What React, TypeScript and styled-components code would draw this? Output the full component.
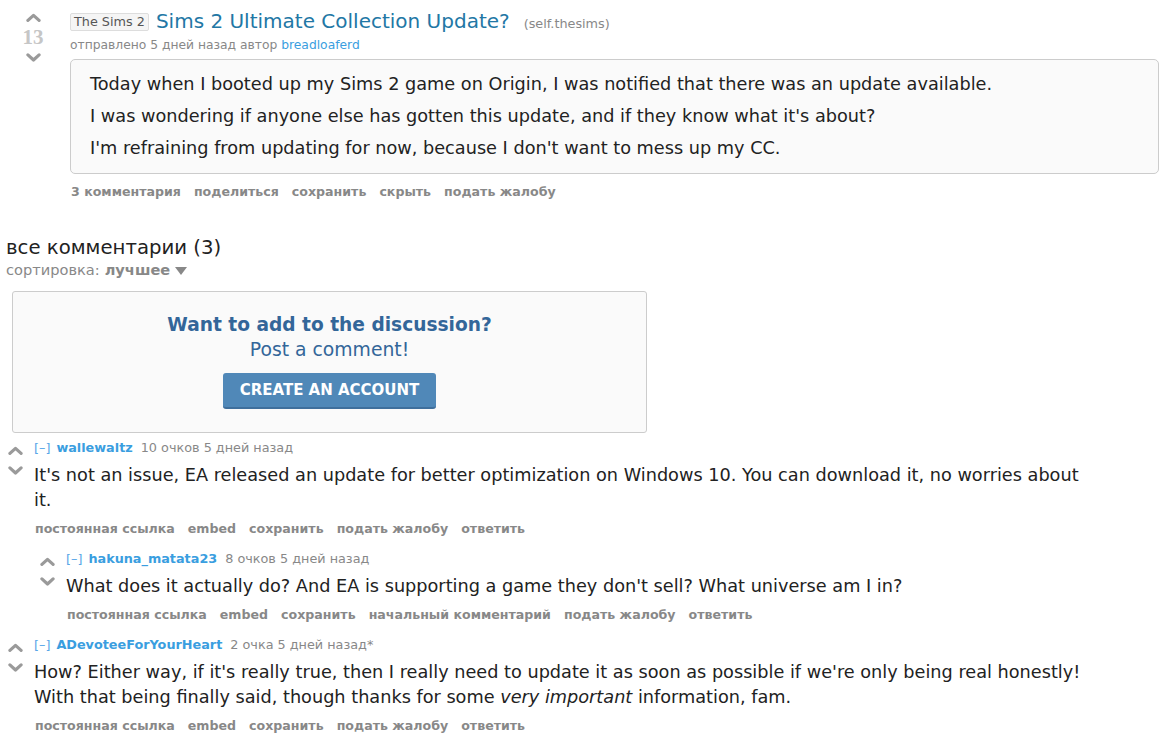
import React from 'react';
import styled, { createGlobalStyle } from 'styled-components';

const GlobalStyle = createGlobalStyle`
  body {
    margin: 0;
    background: #fff;
    font-family: 'DejaVu Sans', Verdana, sans-serif;
    color: #222;
  }
`;

const Page = styled.div`
  padding: 9px 0 0 6px;
`;

const Thing = styled.div`
  display: flex;
  align-items: flex-start;
`;

const Midcol = styled.div`
  width: 54px;
  margin-right: 10px;
  display: flex;
  flex-direction: column;
  align-items: center;
  padding-top: 4px;
  flex-shrink: 0;
`;

const Score = styled.div`
  font-family: 'Liberation Serif', 'Times New Roman', serif;
  font-weight: bold;
  font-size: 21px;
  line-height: 24px;
  color: #c6c6c6;
  margin: 3px 0 4px;
`;

const Entry = styled.div`
  flex: 1;
  padding-right: 11px;
`;

const TitleRow = styled.div`
  display: flex;
  align-items: baseline;
  white-space: nowrap;
  line-height: 24px;
`;

const Flair = styled.span`
  font-size: 12.8px;
  line-height: 16px;
  color: #555;
  background: #f5f5f5;
  border: 1px solid #ddd;
  border-radius: 2px;
  padding: 0 3px;
  margin-right: 7px;
  position: relative;
  top: -2px;
`;

const Title = styled.a`
  font-size: 20px;
  color: #2277a5;
  text-decoration: none;
  margin-right: 14px;
`;

const Domain = styled.span`
  font-size: 12.8px;
  color: #888;
`;

const Tagline = styled.div`
  font-size: 12.3px;
  line-height: 17px;
  color: #888;
  margin-top: 1px;
`;

const UserLink = styled.a`
  color: #3a9ee0;
  text-decoration: none;
`;

const SelfText = styled.div`
  background: #fafafa;
  border: 1px solid #ccc;
  border-radius: 5px;
  padding: 3px 19px 4px;
  margin-top: 5px;
`;

const Para = styled.p`
  font-size: 17.7px;
  line-height: 22px;
  margin: 10px 0;
  color: #222;
`;

const Buttons = styled.ul<{ $top?: number }>`
  list-style: none;
  display: flex;
  gap: 13px;
  margin: ${(p) => p.$top ?? 10}px 0 0;
  padding: 0 0 0 1px;
  font-size: 12.6px;
  line-height: 15px;
  font-weight: bold;
  color: #888;
  white-space: nowrap;
`;

const Area = styled.div`
  margin-top: 37px;
`;

const AreaTitle = styled.div`
  font-size: 19.7px;
  line-height: 24px;
  color: #222;
`;

const SortLine = styled.div`
  font-size: 14.6px;
  line-height: 20px;
  color: #888;
  display: flex;
  align-items: center;
  gap: 5px;

  b {
    color: #888;
  }
`;

const Caret = styled.span`
  width: 0;
  height: 0;
  border-left: 6px solid transparent;
  border-right: 6px solid transparent;
  border-top: 8px solid #888;
  margin-top: 2px;
`;

const Promo = styled.div`
  margin: 11px 0 0 6px;
  width: 635px;
  height: 142px;
  box-sizing: border-box;
  background: #fafafa;
  border: 1px solid #ccc;
  border-radius: 3px;
  display: flex;
  flex-direction: column;
  align-items: center;
  padding-top: 21px;
`;

const PromoHead = styled.div`
  font-size: 18.6px;
  font-weight: bold;
  color: #336699;
  line-height: 24px;
`;

const PromoSub = styled.div`
  font-size: 18.8px;
  color: #336699;
  line-height: 24px;
  margin-top: 1px;
`;

const CreateButton = styled.button`
  margin-top: 11px;
  width: 213px;
  height: 36px;
  background: #5088b8;
  border: none;
  border-bottom: 2px solid #3f6f9c;
  border-radius: 3px;
  color: #fff;
  font-family: 'DejaVu Sans', Verdana, sans-serif;
  font-weight: bold;
  font-size: 15px;
  padding: 0;
`;

const Comment = styled.div<{ $indent?: number; $top?: number }>`
  display: flex;
  align-items: flex-start;
  margin-left: ${(p) => p.$indent ?? 0}px;
  margin-top: ${(p) => p.$top ?? 14}px;
`;

const Arrows = styled.div`
  width: 26px;
  display: flex;
  flex-direction: column;
  align-items: flex-start;
  gap: 11px;
  padding: 7px 0 0 2px;
  flex-shrink: 0;
`;

const CommentBody = styled.div`
  flex: 1;
`;

const CTagline = styled.div`
  font-size: 12.8px;
  color: #888;
  line-height: 18px;
`;

const Expand = styled.span`
  color: #58a6e8;
`;

const Author = styled.a`
  color: #3a9ee0;
  font-weight: bold;
  text-decoration: none;
  margin: 0 8px 0 6px;
`;

const CText = styled.p`
  font-size: 17.7px;
  line-height: 25px;
  margin: 6px 0 0;
  max-width: 1052px;
  color: #222;
`;

const Arrow: React.FC<{ down?: boolean; size?: number }> = ({ down, size = 15 }) => (
  <svg width={size} height={size * 0.62} viewBox="0 0 16 10">
    <path
      d={down ? 'M2 2 L8 7.5 L14 2' : 'M2 8 L8 2.5 L14 8'}
      fill="none"
      stroke="#9a9a9a"
      strokeWidth="3.4"
      strokeLinecap="round"
      strokeLinejoin="round"
    />
  </svg>
);

interface CommentData {
  author: string;
  points: string;
  time: string;
  body: React.ReactNode;
  buttons: string[];
  indent?: number;
  top?: number;
}

const comments: CommentData[] = [
  {
    author: 'wallewaltz',
    points: '10 очков',
    time: '5 дней назад',
    body: "It's not an issue, EA released an update for better optimization on Windows 10. You can download it, no worries about it.",
    buttons: ['постоянная ссылка', 'embed', 'сохранить', 'подать жалобу', 'ответить'],
    top: 6,
  },
  {
    author: 'hakuna_matata23',
    points: '8 очков',
    time: '5 дней назад',
    body: "What does it actually do? And EA is supporting a game they don't sell? What universe am I in?",
    buttons: ['постоянная ссылка', 'embed', 'сохранить', 'начальный комментарий', 'подать жалобу', 'ответить'],
    indent: 32,
  },
  {
    author: 'ADevoteeForYourHeart',
    points: '2 очка',
    time: '5 дней назад*',
    body: (
      <>
        How? Either way, if it's really true, then I really need to update it as soon as possible if we're only being
        real honestly! With that being finally said, though thanks for some <em>very important</em> information, fam.
      </>
    ),
    buttons: ['постоянная ссылка', 'embed', 'сохранить', 'подать жалобу', 'ответить'],
  },
];

const App: React.FC = () => (
  <>
    <GlobalStyle />
    <Page>
      <Thing>
        <Midcol>
          <Arrow />
          <Score>13</Score>
          <Arrow down />
        </Midcol>
        <Entry>
          <TitleRow>
            <Flair>The Sims 2</Flair>
            <Title href="#">Sims 2 Ultimate Collection Update?</Title>
            <Domain>(self.thesims)</Domain>
          </TitleRow>
          <Tagline>
            отправлено 5 дней назад автор <UserLink href="#">breadloaferd</UserLink>
          </Tagline>
          <SelfText>
            <Para>
              Today when I booted up my Sims 2 game on Origin, I was notified that there was an update available.
            </Para>
            <Para>I was wondering if anyone else has gotten this update, and if they know what it's about?</Para>
            <Para>I'm refraining from updating for now, because I don't want to mess up my CC.</Para>
          </SelfText>
          <Buttons $top={10}>
            <li>3 комментария</li>
            <li>поделиться</li>
            <li>сохранить</li>
            <li>скрыть</li>
            <li>подать жалобу</li>
          </Buttons>
        </Entry>
      </Thing>

      <Area>
        <AreaTitle>все комментарии (3)</AreaTitle>
        <SortLine>
          сортировка: <b>лучшее</b>
          <Caret />
        </SortLine>
        <Promo>
          <PromoHead>Want to add to the discussion?</PromoHead>
          <PromoSub>Post a comment!</PromoSub>
          <CreateButton>CREATE AN ACCOUNT</CreateButton>
        </Promo>
      </Area>

      {comments.map((c) => (
        <Comment key={c.author} $indent={c.indent} $top={c.top}>
          <Arrows>
            <Arrow />
            <Arrow down />
          </Arrows>
          <CommentBody>
            <CTagline>
              <Expand>[–]</Expand>
              <Author href="#">{c.author}</Author>
              {c.points} {c.time}
            </CTagline>
            <CText>{c.body}</CText>
            <Buttons $top={8}>
              {c.buttons.map((b) => (
                <li key={b}>{b}</li>
              ))}
            </Buttons>
          </CommentBody>
        </Comment>
      ))}
    </Page>
  </>
);

export default App;
